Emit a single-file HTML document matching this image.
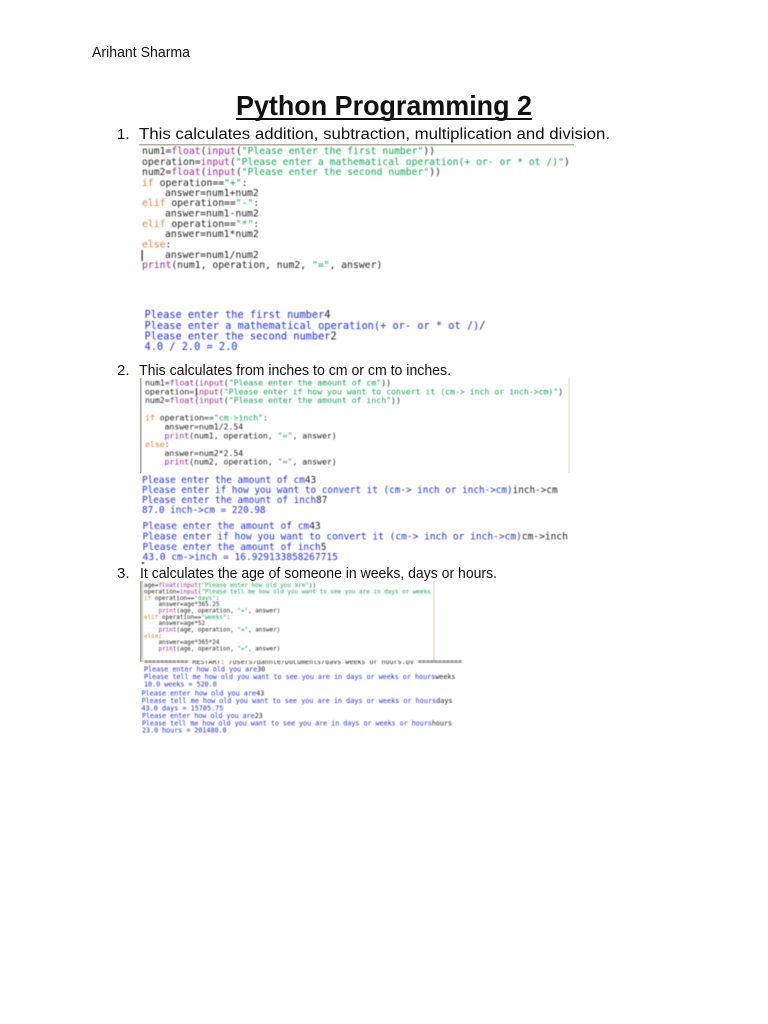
<!DOCTYPE html>
<html><head><meta charset="utf-8"><style>
html,body{margin:0;padding:0;background:#fff;width:768px;height:1024px;overflow:hidden}
svg{position:absolute;left:0;top:0}
.h{font-family:"Liberation Sans",sans-serif;fill:#111}
.m{font-family:"DejaVu Sans Mono","Liberation Mono",monospace;fill:#222}
.g tspan.k{fill:#f07a30}.g tspan.b{fill:#a0209a}.g tspan.s{fill:#10a850}
.o{fill:#2030e8}.o tspan{fill:#222}
.soft{filter:blur(.25px)}
.img{filter:blur(.45px)}
.softer{filter:blur(.6px)}
</style></head><body>
<svg width="768" height="1024" viewBox="0 0 768 1024" xmlns="http://www.w3.org/2000/svg">
<g class="soft">
<text class="h" x="92" y="57" font-size="15" textLength="98" lengthAdjust="spacingAndGlyphs">Arihant Sharma</text>
<text class="h" x="236" y="115" font-size="28" font-weight="bold" textLength="296" lengthAdjust="spacingAndGlyphs">Python Programming 2</text>
<rect x="236" y="118" width="296" height="2" fill="#111"/>
<text class="h" x="117" y="139" font-size="15">1.</text>
<text class="h" x="139" y="139" font-size="15.5" textLength="471" lengthAdjust="spacingAndGlyphs">This calculates addition, subtraction, multiplication and division.</text>
<text class="h" x="117" y="375" font-size="15">2.</text>
<text class="h" x="139" y="375" font-size="15" textLength="312" lengthAdjust="spacingAndGlyphs">This calculates from inches to cm or cm to inches.</text>
<text class="h" x="117" y="578" font-size="15">3.</text>
<text class="h" x="140" y="578" font-size="15" textLength="357" lengthAdjust="spacingAndGlyphs">It calculates the age of someone in weeks, days or hours.</text>
</g>

<!-- image 1 -->
<rect x="139" y="144" width="435" height="1.5" fill="#b5ae9c"/>
<g class="img">
<g class="m g" font-size="9.74">
<text x="142" y="154">num1=<tspan class="b">float</tspan>(<tspan class="b">input</tspan>(<tspan class="s">"Please enter the first number"</tspan>))</text>
<text x="142" y="165">operation=<tspan class="b">input</tspan>(<tspan class="s">"Please enter a mathematical operation(+ or- or * ot /)"</tspan>)</text>
<text x="142" y="175">num2=<tspan class="b">float</tspan>(<tspan class="b">input</tspan>(<tspan class="s">"Please enter the second number"</tspan>))</text>
<text x="142" y="186"><tspan class="k">if</tspan> operation==<tspan class="s">"+"</tspan>:</text>
<text x="165" y="196">answer=num1+num2</text>
<text x="142" y="206"><tspan class="k">elif</tspan> operation==<tspan class="s">"-"</tspan>:</text>
<text x="165" y="216.5">answer=num1-num2</text>
<text x="142" y="227"><tspan class="k">elif</tspan> operation==<tspan class="s">"*"</tspan>:</text>
<text x="165" y="237">answer=num1*num2</text>
<text x="142" y="247.5"><tspan class="k">else</tspan>:</text>
<text x="165" y="258">answer=num1/num2</text>
<text x="142" y="268"><tspan class="b">print</tspan>(num1, operation, num2, <tspan class="s">"="</tspan>, answer)</text>
</g>
<rect x="141.5" y="250" width="1.2" height="11" fill="#222"/>
<g class="m o" font-size="10.3">
<text x="144.5" y="318">Please enter the first number<tspan>4</tspan></text>
<text x="144.5" y="329">Please enter a mathematical operation(+ or- or * ot /)<tspan>/</tspan></text>
<text x="144.5" y="339.5">Please enter the second number<tspan>2</tspan></text>
<text x="144.5" y="350">4.0 / 2.0 = 2.0</text>
</g>
</g>

<!-- image 2 -->
<rect x="140" y="378" width="1.5" height="95" fill="#a8a49a"/>
<rect x="568.5" y="378" width="1" height="95" fill="#ead9bd"/>
<g class="img">
<g class="m g" font-size="8.19">
<text x="145" y="385.5">num1=<tspan class="b">float</tspan>(<tspan class="b">input</tspan>(<tspan class="s">"Please enter the amount of cm"</tspan>))</text>
<text x="145" y="394.5">operation=<tspan class="b">input</tspan>(<tspan class="s">"Please enter if how you want to convert it (cm-&gt; inch or inch-&gt;cm)"</tspan>)</text>
<text x="145" y="403">num2=<tspan class="b">float</tspan>(<tspan class="b">input</tspan>(<tspan class="s">"Please enter the amount of inch"</tspan>))</text>
<text x="145" y="420.5"><tspan class="k">if</tspan> operation==<tspan class="s">"cm-&gt;inch"</tspan>:</text>
<text x="164.5" y="429.5">answer=num1/2.54</text>
<text x="164.5" y="438.5"><tspan class="b">print</tspan>(num1, operation, <tspan class="s">"="</tspan>, answer)</text>
<text x="145" y="447"><tspan class="k">else</tspan>:</text>
<text x="164.5" y="456">answer=num2*2.54</text>
<text x="164.5" y="464.5"><tspan class="b">print</tspan>(num2, operation, <tspan class="s">"="</tspan>, answer)</text>
</g>
<rect x="196" y="388" width="0.8" height="9" fill="#222"/>
<g class="m o" font-size="9.34">
<text x="142" y="483">Please enter the amount of cm<tspan>43</tspan></text>
<text x="142" y="493">Please enter if how you want to convert it (cm-&gt; inch or inch-&gt;cm)<tspan>inch-&gt;cm</tspan></text>
<text x="142" y="503">Please enter the amount of inch<tspan>87</tspan></text>
<text x="142" y="513">87.0 inch-&gt;cm = 220.98</text>
</g>
<g class="m o" font-size="9.55">
<text x="142.5" y="529">Please enter the amount of cm<tspan>43</tspan></text>
<text x="142.5" y="539.5">Please enter if how you want to convert it (cm-&gt; inch or inch-&gt;cm)<tspan>cm-&gt;inch</tspan></text>
<text x="142.5" y="550">Please enter the amount of inch<tspan>5</tspan></text>
<text x="142.5" y="560">43.0 cm-&gt;inch = 16.929133858267715</text>
</g>
<rect x="142" y="562" width="2" height="2" fill="#333"/>
</g>

<!-- image 3 -->
<defs><linearGradient id="e" x1="0" x2="1" y1="0" y2="0"><stop offset="0" stop-color="#9a9a94"/><stop offset="1" stop-color="#fff"/></linearGradient></defs>
<rect x="140" y="581" width="4" height="81" fill="url(#e)"/>
<rect x="433" y="581" width="2" height="81" fill="#efe6d2"/>
<g class="softer">
<g class="m g" font-size="5.96">
<text x="144" y="587">age=<tspan class="b">float</tspan>(<tspan class="b">input</tspan>(<tspan class="s">"Please enter how old you are"</tspan>))</text>
<text x="144" y="593.5">operation=<tspan class="b">input</tspan>(<tspan class="s">"Please tell me how old you want to see you are in days or weeks</tspan></text>
<text x="144" y="600"><tspan class="k">if</tspan> operation==<tspan class="s">"days"</tspan>:</text>
<text x="158.5" y="606">answer=age*365.25</text>
<text x="158.5" y="612.5"><tspan class="b">print</tspan>(age, operation, <tspan class="s">"="</tspan>, answer)</text>
<text x="144" y="619"><tspan class="k">elif</tspan> operation==<tspan class="s">"weeks"</tspan>:</text>
<text x="158.5" y="625">answer=age*52</text>
<text x="158.5" y="631.5"><tspan class="b">print</tspan>(age, operation, <tspan class="s">"="</tspan>, answer)</text>
<text x="144" y="638"><tspan class="k">else</tspan>:</text>
<text x="158.5" y="644">answer=age*365*24</text>
<text x="158.5" y="650.5"><tspan class="b">print</tspan>(age, operation, <tspan class="s">"="</tspan>, answer)</text>
</g>
<svg x="140" y="660.5" width="330" height="3.5" viewBox="140 660.5 330 3.5">
<text class="m" x="144" y="664" font-size="6.7">=========== RESTART: /Users/dahnte/Documents/days weeks or hours.py ===========</text>
</svg>
<g class="m o" font-size="6.73">
<text x="144" y="671.5">Please enter how old you are<tspan>30</tspan></text>
<text x="144" y="679">Please tell me how old you want to see you are in days or weeks or hours<tspan>weeks</tspan></text>
<text x="144" y="686.5">10.0 weeks = 520.0</text>
</g>
<g class="m o" font-size="6.8">
<text x="141.5" y="695.5">Please enter how old you are<tspan>43</tspan></text>
<text x="141.5" y="703">Please tell me how old you want to see you are in days or weeks or hours<tspan>days</tspan></text>
<text x="141.5" y="710.5">43.0 days = 15705.75</text>
</g>
<g class="m o" font-size="6.7">
<text x="142" y="718">Please enter how old you are<tspan>23</tspan></text>
<text x="142" y="725.5">Please tell me how old you want to see you are in days or weeks or hours<tspan>hours</tspan></text>
<text x="142" y="732.5">23.0 hours = 201480.0</text>
</g>
</g>
</svg>
</body></html>
